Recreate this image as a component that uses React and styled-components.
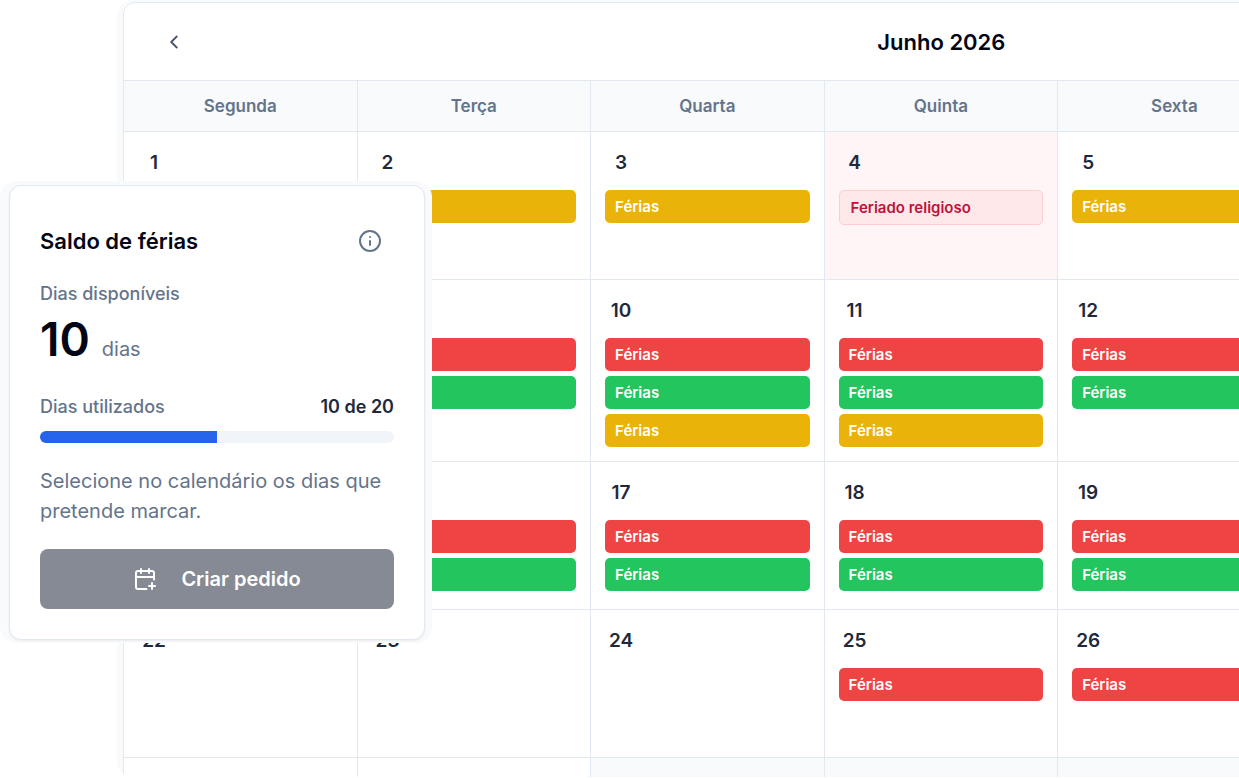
import React from "react";
import styled, { createGlobalStyle } from "styled-components";
import { CalendarPlus, ChevronLeft, Info } from "lucide-react";

const GlobalStyle = createGlobalStyle`
  *, *::before, *::after { box-sizing: border-box; }
  body {
    margin: 0;
    background: #ffffff;
    color: #020617;
    font-family: Inter, "Liberation Sans", sans-serif;
  }
  button { font-family: inherit; }
`;

const Page = styled.main`
  position: relative;
  height: 100vh;
  overflow: hidden;
  padding: 0 0 1px 117px;
`;

const CalendarFrame = styled.div`
  height: 100%;
  overflow: hidden;
  padding: 2px 0 0 6px;
  background: #f8fafc;
  border-radius: 16px 0 0 16px;
`;

const Calendar = styled.section`
  width: 132.1vw;
  background: #ffffff;
  border: 1px solid #e2e8f0;
  border-radius: 12px;
  overflow: hidden;
`;

const CalendarHeader = styled.header`
  display: grid;
  grid-template-columns: 1fr auto 1fr;
  align-items: center;
  height: 78px;
  padding: 0 30px;
  border-bottom: 1px solid #e2e8f0;
`;

const IconButton = styled.button`
  display: flex;
  align-items: center;
  justify-content: center;
  width: ${(p) => p.$size}px;
  height: ${(p) => p.$size}px;
  padding: 0;
  border: 0;
  border-radius: 8px;
  background: transparent;
  color: ${(p) => p.$color};
`;

const MonthTitle = styled.h1`
  margin: 0;
  font-size: 22px;
  line-height: 32px;
  font-weight: 600;
`;

const MonthTable = styled.table`
  width: 100%;
  table-layout: fixed;
  border-collapse: separate;
  border-spacing: 0;
`;

const Weekday = styled.th`
  height: 51px;
  padding: 0;
  background: #f8fafc;
  border-right: 1px solid #e2e8f0;
  border-bottom: 1px solid #e2e8f0;
  color: #64748b;
  font-size: 17px;
  line-height: 24px;
  font-weight: 600;
`;

const backgrounds = { normal: "#ffffff", holiday: "#fff4f6", outside: "#f8fafc" };

const DayCell = styled.td`
  height: 148px;
  padding: 14px;
  vertical-align: top;
  background: ${(p) => backgrounds[p.$kind]};
  border-right: 1px solid #e2e8f0;
  border-bottom: 1px solid #e2e8f0;
`;

const DayNumber = styled.div`
  width: 32px;
  height: 34px;
  margin-bottom: 10px;
  color: #1e293b;
  font-size: 19px;
  line-height: 34px;
  font-weight: 600;
  text-align: center;
`;

const EventList = styled.div`
  display: flex;
  flex-direction: column;
  gap: 5px;
`;

const eventColors = { red: "#ef4444", green: "#22c55e", yellow: "#eab308" };

const Event = styled.div`
  height: 33px;
  padding: 0 10px;
  border-radius: 5px;
  background: ${(p) => eventColors[p.$color]};
  color: #ffffff;
  font-size: 15px;
  line-height: 33px;
  font-weight: 600;
`;

const Holiday = styled.div`
  padding: 0 11px;
  border: 1px solid #fecdd3;
  border-radius: 5px;
  background: #ffe8ea;
  color: #be123c;
  font-size: 15px;
  line-height: 33px;
  font-weight: 600;
`;

const BalanceHalo = styled.aside`
  position: absolute;
  top: 181px;
  left: 0;
  width: 432px;
  padding: 4px 7px 3px 9px;
  border-radius: 16px;
  background: #f8fafc;
`;

const BalanceCard = styled.div`
  padding: 30px;
  border: 1px solid #e2e8f0;
  border-radius: 12px;
  background: #ffffff;
  box-shadow: 0 1px 2px rgba(15, 23, 42, 0.06);
`;

const SplitRow = styled.div`
  display: flex;
  align-items: center;
  justify-content: space-between;
`;

const CardTitle = styled.h2`
  margin: 0;
  font-size: 22px;
  line-height: 50px;
  font-weight: 600;
`;

const Label = styled.div`
  color: #64748b;
  font-size: 18px;
  line-height: 24px;
  font-weight: 500;
`;

const Available = styled.div`
  margin-top: 16px;
`;

const Amount = styled.div`
  display: flex;
  align-items: baseline;
  gap: 12px;
  margin: 3px 0 16px;
  line-height: 60px;
`;

const AmountValue = styled.strong`
  font-size: 46px;
  font-weight: 600;
`;

const AmountUnit = styled.span`
  color: #64748b;
  font-size: 20px;
`;

const UsedValue = styled.span`
  color: #1e293b;
  font-size: 18px;
  line-height: 24px;
  font-weight: 600;
`;

const Track = styled.div`
  height: 12px;
  margin-top: 12px;
  border-radius: 6px;
  overflow: hidden;
  background: #f1f5f9;
`;

const Fill = styled.div`
  height: 100%;
  background: #2563eb;
`;

const Hint = styled.p`
  margin: 23px 0;
  color: #64748b;
  font-size: 20px;
  line-height: 30px;
`;

const SubmitButton = styled.button`
  display: flex;
  align-items: center;
  justify-content: center;
  gap: 24px;
  width: 100%;
  height: 60px;
  padding: 0;
  border: 0;
  border-radius: 8px;
  background: #868a94;
  color: #ffffff;
  font-size: 20px;
  font-weight: 600;
`;

const weekdays = ["Segunda", "Terça", "Quarta", "Quinta", "Sexta", "", ""];

const weeks = [
  [
    { day: 1 },
    { day: 2, events: ["yellow"] },
    { day: 3, events: ["yellow"] },
    { day: 4, kind: "holiday", holiday: "Feriado religioso" },
    { day: 5, events: ["yellow"] },
    {},
    {},
  ],
  [
    {},
    { events: ["red", "green"] },
    { day: 10, events: ["red", "green", "yellow"] },
    { day: 11, events: ["red", "green", "yellow"] },
    { day: 12, events: ["red", "green"] },
    {},
    {},
  ],
  [
    {},
    { events: ["red", "green"] },
    { day: 17, events: ["red", "green"] },
    { day: 18, events: ["red", "green"] },
    { day: 19, events: ["red", "green"] },
    {},
    {},
  ],
  [
    { day: 22 },
    { day: 23 },
    { day: 24 },
    { day: 25, events: ["red"] },
    { day: 26, events: ["red"] },
    {},
    {},
  ],
  [
    {},
    {},
    { kind: "outside" },
    { kind: "outside" },
    { kind: "outside" },
    { kind: "outside" },
    { kind: "outside" },
  ],
];

function Day({ day, kind = "normal", holiday, events = [] }) {
  return (
    <DayCell $kind={kind}>
      <DayNumber>{day}</DayNumber>
      <EventList>
        {holiday && <Holiday>{holiday}</Holiday>}
        {events.map((color) => (
          <Event key={color} $color={color}>
            {day ? "Férias" : null}
          </Event>
        ))}
      </EventList>
    </DayCell>
  );
}

function Balance({ used, total }) {
  return (
    <BalanceHalo>
      <BalanceCard>
        <SplitRow>
          <CardTitle>Saldo de férias</CardTitle>
          <IconButton type="button" aria-label="Informação" $size={48} $color="#64748b">
            <Info size={24} />
          </IconButton>
        </SplitRow>
        <Available>
          <Label>Dias disponíveis</Label>
          <Amount>
            <AmountValue>{total - used}</AmountValue>
            <AmountUnit>dias</AmountUnit>
          </Amount>
        </Available>
        <SplitRow>
          <Label id="used-label">Dias utilizados</Label>
          <UsedValue>{`${used} de ${total}`}</UsedValue>
        </SplitRow>
        <Track
          role="progressbar"
          aria-labelledby="used-label"
          aria-valuenow={used}
          aria-valuemin={0}
          aria-valuemax={total}
        >
          <Fill style={{ width: `${(used / total) * 100}%` }} />
        </Track>
        <Hint>Selecione no calendário os dias que pretende marcar.</Hint>
        <SubmitButton type="button" disabled>
          <CalendarPlus size={24} />
          Criar pedido
        </SubmitButton>
      </BalanceCard>
    </BalanceHalo>
  );
}

export default function App() {
  return (
    <Page>
      <GlobalStyle />
      <CalendarFrame>
        <Calendar>
          <CalendarHeader>
            <IconButton type="button" aria-label="Mês anterior" $size={40} $color="#475569">
              <ChevronLeft size={22} />
            </IconButton>
            <MonthTitle>Junho 2026</MonthTitle>
          </CalendarHeader>
          <MonthTable>
            <thead>
              <tr>
                {weekdays.map((name, i) => (
                  <Weekday key={i} scope="col">{name}</Weekday>
                ))}
              </tr>
            </thead>
            <tbody>
              {weeks.map((week, i) => (
                <tr key={i}>
                  {week.map((cell, j) => (
                    <Day key={j} {...cell} />
                  ))}
                </tr>
              ))}
            </tbody>
          </MonthTable>
        </Calendar>
      </CalendarFrame>
      <Balance used={10} total={20} />
    </Page>
  );
}
